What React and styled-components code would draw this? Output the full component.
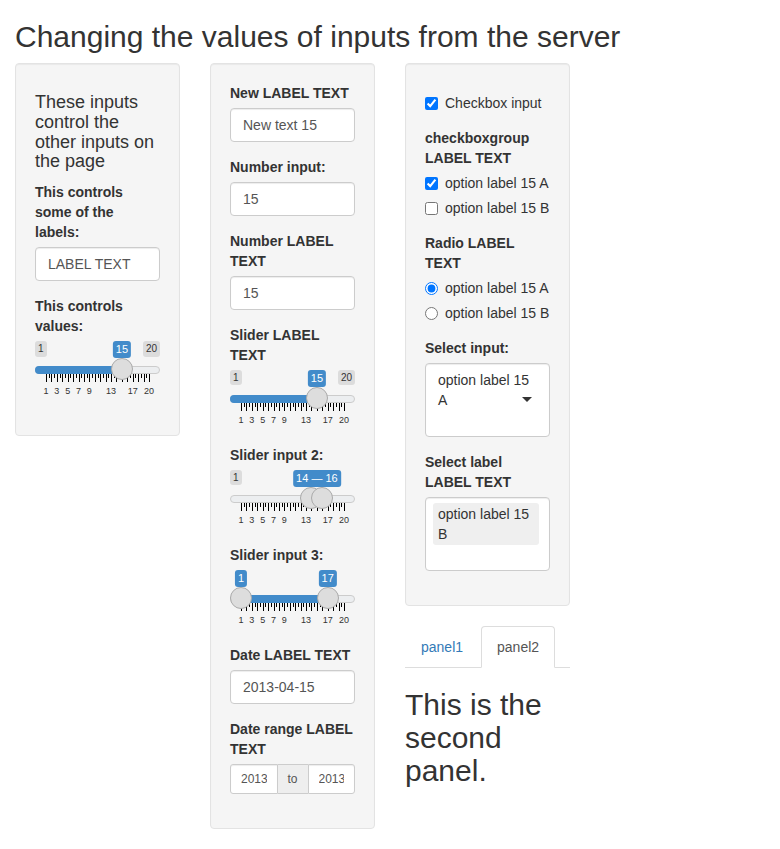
import React from 'react';
import styled, { createGlobalStyle, css } from 'styled-components';

const GlobalStyle = createGlobalStyle`
  *, *::before, *::after { box-sizing: border-box; }
  html, body { margin: 0; padding: 0; }
  body {
    font-family: "Liberation Sans", Arial, Helvetica, sans-serif;
    font-size: 14px;
    line-height: 1.42857143;
    color: #333;
    background: #fff;
  }
`;

const Page = styled.div`
  padding: 0 15px;
`;

const Title = styled.h2`
  font-size: 30px;
  font-weight: 400;
  line-height: 1.1;
  margin: 20px 0 10px;
`;

const Row = styled.div`
  display: grid;
  grid-template-columns: repeat(4, 1fr);
  column-gap: 30px;
  align-items: start;
`;

const Column = styled.div`
  min-width: 0;
`;

const Well = styled.div`
  min-height: 20px;
  padding: 19px;
  margin-bottom: 20px;
  background: #f5f5f5;
  border: 1px solid #e3e3e3;
  border-radius: 4px;
  box-shadow: inset 0 1px 1px rgba(0, 0, 0, 0.05);
`;

const Intro = styled.h4`
  font-size: 18px;
  font-weight: 400;
  line-height: 1.1;
  margin: 10px 0;
`;

const FormGroup = styled.div`
  margin-bottom: 15px;
`;

const Label = styled.label`
  display: block;
  max-width: 100%;
  margin-bottom: 5px;
  font-weight: 700;
`;

const TextInput = styled.input`
  display: block;
  width: 100%;
  height: 34px;
  padding: 6px 12px;
  font-family: inherit;
  font-size: 14px;
  line-height: 1.42857143;
  color: #555;
  background: #fff;
  border: 1px solid #ccc;
  border-radius: 4px;
  box-shadow: inset 0 1px 1px rgba(0, 0, 0, 0.075);
  outline: none;
`;

/* ---------- checkbox / radio ---------- */
const OptionGroup = styled.div`
  display: flex;
  flex-direction: column;
  gap: 5px;
`;

const OptionLabel = styled.label`
  display: flex;
  align-items: flex-start;
  min-height: 20px;
  font-weight: 400;
  margin: ${(p) => (p.$standalone ? '10px 0 0' : '0')};
`;

const OptionBox = styled.input`
  flex: none;
  width: 13px;
  height: 13px;
  margin: 4px 7px 0 0;
`;

/* ---------- selectize ---------- */
const SelectBox = styled.div`
  position: relative;
  background: #fff;
  border: 1px solid #ccc;
  border-radius: 4px;
  box-shadow: inset 0 1px 1px rgba(0, 0, 0, 0.075);
  line-height: 20px;
  color: #333;
  padding: ${(p) => (p.$multi ? '5px 7px 2px' : '6px 12px')};
  ${(p) =>
    !p.$multi &&
    css`
      &::after {
        content: '';
        position: absolute;
        top: 50%;
        right: 17px;
        margin-top: -3px;
        border-style: solid;
        border-width: 5px 5px 0 5px;
        border-color: #333 transparent transparent transparent;
      }
    `}
`;

const SelectItem = styled.div`
  ${(p) =>
    p.$multi &&
    css`
      margin: 0 3px 3px 0;
      padding: 1px 5px;
      background: #efefef;
      border-radius: 3px;
    `}
`;

const SelectCursorLine = styled.div`
  height: 20px;
`;

/* ---------- date range ---------- */
const RangeGroup = styled.div`
  display: flex;
  width: 100%;
`;

const RangeInput = styled.input`
  flex: 1 1 0;
  min-width: 0;
  height: 30px;
  padding: 5px 10px;
  font-family: inherit;
  font-size: 12px;
  line-height: 1.5;
  text-align: center;
  color: #555;
  background: #fff;
  border: 1px solid #ccc;
  border-radius: ${(p) => (p.$side === 'left' ? '3px 0 0 3px' : '0 3px 3px 0')};
  box-shadow: inset 0 1px 1px rgba(0, 0, 0, 0.075);
  outline: none;
`;

const RangeAddon = styled.span`
  flex: none;
  padding: 5px 10px;
  font-size: 12px;
  line-height: 18px;
  color: #555;
  background: #eee;
  border: 1px solid #ccc;
  border-left: 0;
  border-right: 0;
`;

/* ---------- ion range slider (shiny skin) ---------- */
const Irs = styled.div`
  position: relative;
  height: 60px;
  width: 100%;
  font-family: "Liberation Sans", Arial, sans-serif;
`;

const IrsLine = styled.div`
  position: absolute;
  left: 0;
  right: 0;
  top: 25px;
  height: 8px;
  border: 1px solid #ccc;
  background: #eceef0;
  border-radius: 16px;
`;

const IrsBar = styled.div`
  position: absolute;
  top: 25px;
  height: 8px;
  background: #428bca;
  border-radius: ${(p) => (p.$edge ? '16px 0 0 16px' : '0')};
`;

const IrsHandle = styled.div`
  position: absolute;
  top: 17px;
  width: 22px;
  height: 22px;
  border: 1px solid #aaa;
  background: #ddd;
  border-radius: 27px;
  z-index: ${(p) => p.$z || 1};
`;

const IrsBadge = styled.span`
  position: absolute;
  top: 0;
  padding: 1px 3px;
  border-radius: 3px;
  line-height: 1.333;
  white-space: nowrap;
  ${(p) =>
    p.$kind === 'value'
      ? css`
          font-size: 11px;
          color: #fff;
          background: #428bca;
          transform: translateX(-50%);
        `
      : css`
          font-size: 10px;
          color: #333;
          background: rgba(0, 0, 0, 0.1);
        `}
`;

const IrsGrid = styled.div`
  position: absolute;
  left: 11px;
  right: 11px;
  bottom: 0;
  height: 27px;
`;

const IrsPol = styled.span`
  position: absolute;
  top: 0;
  width: 1px;
  height: ${(p) => (p.$small ? '4px' : '8px')};
  background: #000;
`;

const IrsGridText = styled.span`
  position: absolute;
  top: 13px;
  font-size: 9px;
  line-height: 9px;
  color: #333;
  white-space: nowrap;
  transform: translateX(-50%);
`;

const SHOWN_GRID = new Set([1, 3, 5, 7, 9, 13, 17, 20]);

function Slider({ min = 1, max = 20, from, to, showMin = true, showMax = true }) {
  const span = max - min;
  const p1 = (from - min) / span;
  const p2 = to != null ? (to - min) / span : null;
  const left = (p) => `calc((100% - 22px) * ${p})`;
  const center = (p) => `calc((100% - 22px) * ${p} + 11px)`;
  const merged = p2 != null && (p2 - p1) * 103 < 20;

  const pols = [];
  for (let v = min; v <= max; v++) {
    const pct = ((v - min) / span) * 100;
    if (v > min) {
      const sp = ((v - 0.5 - min) / span) * 100;
      pols.push(<IrsPol key={`s${v}`} $small style={{ left: `${sp}%` }} />);
    }
    pols.push(<IrsPol key={`b${v}`} style={{ left: `${pct}%` }} />);
  }

  return (
    <Irs>
      <IrsLine />
      {p2 == null ? (
        <IrsBar $edge style={{ left: 0, width: center(p1) }} />
      ) : (
        <IrsBar style={{ left: center(p1), width: `calc((100% - 22px) * ${p2 - p1})` }} />
      )}
      {showMin && <IrsBadge $kind="edge" style={{ left: 0 }}>{min}</IrsBadge>}
      {showMax && <IrsBadge $kind="edge" style={{ right: 0 }}>{max}</IrsBadge>}
      {p2 == null && <IrsBadge $kind="value" style={{ left: center(p1) }}>{from}</IrsBadge>}
      {p2 != null && merged && (
        <IrsBadge $kind="value" style={{ left: center((p1 + p2) / 2) }}>
          {from} — {to}
        </IrsBadge>
      )}
      {p2 != null && !merged && (
        <>
          <IrsBadge $kind="value" style={{ left: center(p1) }}>{from}</IrsBadge>
          <IrsBadge $kind="value" style={{ left: center(p2) }}>{to}</IrsBadge>
        </>
      )}
      <IrsHandle style={{ left: left(p1) }} $z={2} />
      {p2 != null && <IrsHandle style={{ left: left(p2) }} $z={3} />}
      <IrsGrid>
        {pols}
        {Array.from({ length: span + 1 }, (_, i) => min + i)
          .filter((v) => SHOWN_GRID.has(v))
          .map((v) => (
            <IrsGridText key={v} style={{ left: `${((v - min) / span) * 100}%` }}>
              {v}
            </IrsGridText>
          ))}
      </IrsGrid>
    </Irs>
  );
}

/* ---------- tabs ---------- */
const Tabs = styled.ul`
  list-style: none;
  margin: 0;
  padding: 0;
  display: flex;
  border-bottom: 1px solid #ddd;
`;

const TabItem = styled.li`
  margin-bottom: -1px;
`;

const TabLink = styled.a`
  display: block;
  margin-right: 2px;
  padding: 10px 15px;
  line-height: 20px;
  border: 1px solid transparent;
  border-radius: 4px 4px 0 0;
  color: #337ab7;
  text-decoration: none;
  ${(p) =>
    p.$active &&
    css`
      color: #555;
      background: #fff;
      border-color: #ddd #ddd transparent;
    `}
`;

const PanelText = styled.h2`
  font-size: 30px;
  font-weight: 400;
  line-height: 1.1;
  margin: 20px 0 10px;
`;

export default function App() {
  return (
    <>
      <GlobalStyle />
      <Page>
        <Title>Changing the values of inputs from the server</Title>
        <Row>
          <Column>
            <Well>
              <Intro>These inputs control the other inputs on the page</Intro>
              <FormGroup>
                <Label>This controls some of the labels:</Label>
                <TextInput readOnly value="LABEL TEXT" />
              </FormGroup>
              <FormGroup>
                <Label>This controls values:</Label>
                <Slider from={15} />
              </FormGroup>
            </Well>
          </Column>

          <Column>
            <Well>
              <FormGroup>
                <Label>New LABEL TEXT</Label>
                <TextInput readOnly value="New text 15" />
              </FormGroup>
              <FormGroup>
                <Label>Number input:</Label>
                <TextInput readOnly value="15" />
              </FormGroup>
              <FormGroup>
                <Label>Number LABEL TEXT</Label>
                <TextInput readOnly value="15" />
              </FormGroup>
              <FormGroup>
                <Label>Slider LABEL TEXT</Label>
                <Slider from={15} />
              </FormGroup>
              <FormGroup>
                <Label>Slider input 2:</Label>
                <Slider from={14} to={16} showMax={false} />
              </FormGroup>
              <FormGroup>
                <Label>Slider input 3:</Label>
                <Slider from={1} to={17} showMin={false} showMax={false} />
              </FormGroup>
              <FormGroup>
                <Label>Date LABEL TEXT</Label>
                <TextInput readOnly value="2013-04-15" />
              </FormGroup>
              <FormGroup>
                <Label>Date range LABEL TEXT</Label>
                <RangeGroup>
                  <RangeInput $side="left" readOnly value="2013-04-14" />
                  <RangeAddon>to</RangeAddon>
                  <RangeInput $side="right" readOnly value="2013-04-16" />
                </RangeGroup>
              </FormGroup>
            </Well>
          </Column>

          <Column>
            <Well>
              <FormGroup>
                <OptionLabel $standalone>
                  <OptionBox type="checkbox" defaultChecked />
                  <span>Checkbox input</span>
                </OptionLabel>
              </FormGroup>
              <FormGroup>
                <Label>checkboxgroup LABEL TEXT</Label>
                <OptionGroup>
                  <OptionLabel>
                    <OptionBox type="checkbox" defaultChecked />
                    <span>option label 15 A</span>
                  </OptionLabel>
                  <OptionLabel>
                    <OptionBox type="checkbox" />
                    <span>option label 15 B</span>
                  </OptionLabel>
                </OptionGroup>
              </FormGroup>
              <FormGroup>
                <Label>Radio LABEL TEXT</Label>
                <OptionGroup>
                  <OptionLabel>
                    <OptionBox type="radio" name="radio" defaultChecked />
                    <span>option label 15 A</span>
                  </OptionLabel>
                  <OptionLabel>
                    <OptionBox type="radio" name="radio" />
                    <span>option label 15 B</span>
                  </OptionLabel>
                </OptionGroup>
              </FormGroup>
              <FormGroup>
                <Label>Select input:</Label>
                <SelectBox>
                  <SelectItem>option label 15 A</SelectItem>
                  <SelectCursorLine />
                </SelectBox>
              </FormGroup>
              <FormGroup>
                <Label>Select label LABEL TEXT</Label>
                <SelectBox $multi>
                  <SelectItem $multi>option label 15 B</SelectItem>
                  <SelectCursorLine />
                </SelectBox>
              </FormGroup>
            </Well>
            <Tabs>
              <TabItem>
                <TabLink href="#">panel1</TabLink>
              </TabItem>
              <TabItem>
                <TabLink href="#" $active>panel2</TabLink>
              </TabItem>
            </Tabs>
            <PanelText>This is the second panel.</PanelText>
          </Column>
          <Column />
        </Row>
      </Page>
    </>
  );
}
